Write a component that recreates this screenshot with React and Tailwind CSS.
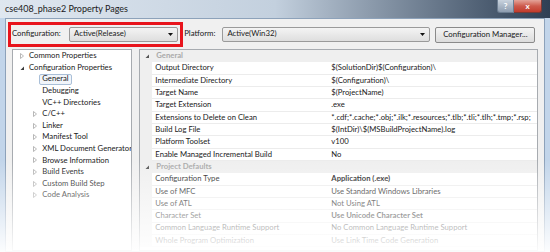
import React from 'react';

const FONT = { fontFamily: 'Lato, "Open Sans", sans-serif' };

const treeItems = [
    { label: 'Common Properties', depth: 0, icon: 'closed' },
    { label: 'Configuration Properties', depth: 0, icon: 'open' },
    { label: 'General', depth: 1, selected: true },
    { label: 'Debugging', depth: 1 },
    { label: 'VC++ Directories', depth: 1 },
    { label: 'C/C++', depth: 1, icon: 'closed' },
    { label: 'Linker', depth: 1, icon: 'closed' },
    { label: 'Manifest Tool', depth: 1, icon: 'closed' },
    { label: 'XML Document Generator', depth: 1, icon: 'closed' },
    { label: 'Browse Information', depth: 1, icon: 'closed' },
    { label: 'Build Events', depth: 1, icon: 'closed' },
    { label: 'Custom Build Step', depth: 1, icon: 'closed' },
    { label: 'Code Analysis', depth: 1, icon: 'closed' },
];

const sections = [
    {
        title: 'General',
        rows: [
            ['Output Directory', '$(SolutionDir)$(Configuration)\\'],
            ['Intermediate Directory', '$(Configuration)\\'],
            ['Target Name', '$(ProjectName)'],
            ['Target Extension', '.exe'],
            ['Extensions to Delete on Clean', '*.cdf;*.cache;*.obj;*.ilk;*.resources;*.tlb;*.tli;*.tlh;*.tmp;*.rsp;'],
            ['Build Log File', '$(IntDir)\\$(MSBuildProjectName).log'],
            ['Platform Toolset', 'v100'],
            ['Enable Managed Incremental Build', 'No'],
        ],
    },
    {
        title: 'Project Defaults',
        rows: [
            ['Configuration Type', 'Application (.exe)', true],
            ['Use of MFC', 'Use Standard Windows Libraries'],
            ['Use of ATL', 'Not Using ATL'],
            ['Character Set', 'Use Unicode Character Set', true],
            ['Common Language Runtime Support', 'No Common Language Runtime Support'],
            ['Whole Program Optimization', 'Use Link Time Code Generation'],
        ],
    },
];

const Closed = () => (
    <svg width="4" height="6" viewBox="0 0 4 6" className="shrink-0">
        <path d="M0.5 0.5 L3.5 3 L0.5 5.5 Z" fill="none" stroke="#a6a6a6" strokeWidth="0.8" />
    </svg>
);

const Open = ({ color = '#3c3c3c' }) => (
    <svg width="4" height="6" viewBox="0 0 4 6" className="shrink-0">
        <path d="M4 1.5 L4 5 L0.5 5 Z" fill={color} />
    </svg>
);

const DownArrow = () => (
    <svg width="5" height="3" viewBox="0 0 5 3" className="shrink-0">
        <path d="M0 0 L5 0 L2.5 3 Z" fill="#111" />
    </svg>
);

const Combo = ({ value, width }) => (
    <div
        className="h-[15px] flex items-center justify-between pl-[4px] pr-[4px] border border-[#9a9a9a] rounded-[2px] bg-linear-to-b from-[#f4f4f4] to-[#dedede] text-[7.8px] text-[#1a1a1a]"
        style={{ width }}
    >
        <span>{value}</span>
        <DownArrow />
    </div>
);

export default function App() {
    return (
        <div className="w-[550px] h-[252px] relative overflow-hidden flex flex-col bg-[#c2d5ea]" style={FONT}>
            {/* title bar */}
            <div className="h-[18px] shrink-0 flex items-start bg-linear-to-r from-[#dfe7f0] via-[#c3d0de] to-[#2e3f54]">
                <span className="pl-[5px] pt-[3px] text-[9px] text-[#1b1b1b] leading-[11px]">cse408_phase2 Property Pages</span>
                <div className="ml-auto mr-[8px] flex">
                    <div className="w-[17px] h-[13px] flex items-center justify-center rounded-bl-[3px] border border-t-0 border-[#6d7e92] bg-linear-to-b from-[#c9d3de] to-[#8e9db0] text-[8px] font-bold text-white">?</div>
                    <div className="w-[28px] h-[13px] flex items-center justify-center rounded-br-[3px] border border-t-0 border-l-0 border-[#7b3a36] bg-linear-to-b from-[#e3a399] via-[#cd5a4c] to-[#c23a2b] text-[8px] font-bold text-white">x</div>
                </div>
            </div>

            {/* client */}
            <div className="flex-1 mx-[5px] flex flex-col bg-[#f0f0f0] border border-[#8da2ba] min-h-0">
                <div className="h-[30px] shrink-0 flex items-center text-[7.8px] text-[#1a1a1a]">
                    <div className="ml-[2.3px] w-[174.4px] h-[25px] border-[3px] border-[#e8141c] flex items-center justify-between pl-[0.7px] pr-[1.7px]">
                        <span>Configuration:</span>
                        <Combo value="Active(Release)" width={109} />
                    </div>
                    <span className="ml-[1.5px]">Platform:</span>
                    <div className="ml-[7px]">
                        <Combo value="Active(Win32)" width={208} />
                    </div>
                    <div className="ml-[5px] mt-[2px] w-[100px] h-[16px] flex items-center justify-center border border-[#8a8a8a] rounded-[2px] bg-linear-to-b from-[#f4f4f4] to-[#dcdcdc]">
                        Configuration Manager...
                    </div>
                </div>

                <div className="flex-1 flex min-h-0">
                    {/* tree */}
                    <div className="ml-[6.3px] w-[120px] bg-white border border-[#a7abb0] pt-[0.2px] text-[7.7px] text-[#1a1a1a] overflow-hidden">
                        {treeItems.map(item => (
                            <div
                                key={item.label}
                                className="h-[11.6px] flex items-center"
                                style={{ paddingLeft: 6.7 + item.depth * 13.3 }}
                            >
                                <div className="w-[4px] flex items-center">
                                    {item.icon === 'closed' && <Closed />}
                                    {item.icon === 'open' && <Open />}
                                </div>
                                {item.selected ? (
                                    <span className="ml-[2px] px-[2px] h-[11px] flex items-center border border-[#a9bfd8] rounded-[2px] bg-[#f1f5fa]">{item.label}</span>
                                ) : (
                                    <span className="ml-[5px] whitespace-nowrap">{item.label}</span>
                                )}
                            </div>
                        ))}
                    </div>

                    {/* property grid */}
                    <div className="ml-[7px] mr-[6px] flex-1 bg-white border border-[#a7abb0] overflow-hidden text-[7.7px] text-[#1a1a1a]">
                        {sections.map(sec => (
                            <div key={sec.title}>
                                <div className="h-[12.33px] flex items-center bg-[#efefef]">
                                    <div className="w-[12px] flex justify-center pl-[1px]">
                                        <Open color="#555" />
                                    </div>
                                    <span className="pl-[4px] font-bold text-[#a9a9a9]">{sec.title}</span>
                                </div>
                                {sec.rows.map(([name, value, bold]) => (
                                    <div key={name} className="h-[12.33px] flex">
                                        <div className="w-[12px] shrink-0 bg-[#efefef]" />
                                        <div className="w-[176px] shrink-0 flex items-center pl-[3px] border-b border-[#ececec] whitespace-nowrap">{name}</div>
                                        <div className={`flex-1 flex items-center pl-[3px] border-b border-[#ececec] whitespace-nowrap overflow-hidden ${bold ? 'font-bold' : ''}`}>{value}</div>
                                    </div>
                                ))}
                            </div>
                        ))}
                    </div>
                </div>
            </div>

            {/* bottom fade */}
            <div className="absolute left-0 right-0 top-[160px] bottom-0 bg-linear-to-b from-white/0 to-white/95 pointer-events-none" />
        </div>
    );
}
